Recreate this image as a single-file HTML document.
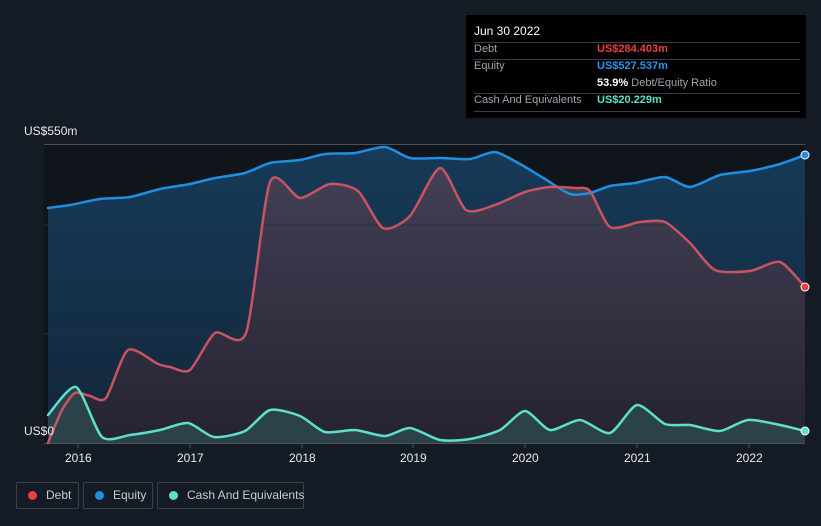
<!DOCTYPE html>
<html><head><meta charset="utf-8"><style>
html,body{margin:0;width:821px;height:526px;overflow:hidden}
body{background:#151b24;font-family:"Liberation Sans",sans-serif;position:relative}
.tt{position:absolute;left:466px;top:15px;width:340px;height:103px;background:#000;color:#fff;font-size:11px}
.tt .r{position:absolute;left:8px;width:326px;border-top:1px solid #3a3d42}
.tt div{white-space:nowrap}
.lab{color:#a0a4ab}
.leg{position:absolute;top:482px;height:27px;border:1px solid #3a3f48;border-radius:2px;color:#c8ccd2;font-size:12px;line-height:25px;box-sizing:border-box;white-space:nowrap}
.leg i{display:inline-block;width:9px;height:9px;border-radius:50%;margin:0 9px 0 11px;vertical-align:-1px}
.ax{position:absolute;color:#e8eaee;font-size:12px}
</style></head><body>
<svg width="821" height="526" style="position:absolute;left:0;top:0">
<defs>
<linearGradient id="eg" x1="0" y1="0" x2="0" y2="1"><stop offset="0" stop-color="#163a58"/><stop offset="1" stop-color="#13263a"/></linearGradient>
<linearGradient id="dg" x1="0" y1="0" x2="0" y2="1"><stop offset="0" stop-color="#433f55"/><stop offset="1" stop-color="#252331"/></linearGradient>
</defs>
<rect x="44" y="144" width="761" height="299" fill="#10141b"/>
<path id="ef" fill="url(#eg)"/>
<path id="df" fill="url(#dg)"/>
<path id="cf" fill="#2d4a50" opacity="0.8"/>
<g stroke="#2a303a" stroke-width="1"><line x1="44" y1="225" x2="805" y2="225"/><line x1="44" y1="334" x2="805" y2="334"/></g>
<g stroke="#4a4f58" stroke-width="1"><line x1="44" y1="144.5" x2="805" y2="144.5"/><line x1="44" y1="443.5" x2="805" y2="443.5"/></g>
<g stroke="#4a4f58"><line x1="78" y1="443" x2="78" y2="448"/><line x1="190" y1="443" x2="190" y2="448"/><line x1="302" y1="443" x2="302" y2="448"/><line x1="413" y1="443" x2="413" y2="448"/><line x1="525" y1="443" x2="525" y2="448"/><line x1="637" y1="443" x2="637" y2="448"/><line x1="749" y1="443" x2="749" y2="448"/></g>
<g fill="none" stroke-width="2.5" stroke-linejoin="round" stroke-linecap="round">
<path id="el" stroke="#1f8fe0"/>
<path id="dl" stroke="#c85462"/>
<path id="cl" stroke="#5ee0c8"/>
</g>
<circle cx="805" cy="155" r="4" fill="#1f8fe0" stroke="#fff" stroke-width="1"/>
<circle cx="805" cy="287" r="4" fill="#e84045" stroke="#fff" stroke-width="1"/>
<circle cx="805" cy="431" r="4" fill="#5ee0c8" stroke="#fff" stroke-width="1"/>
</svg>
<script>
var E=[[48,208],[70,205],[100,199],[130,197],[160,189],[190,184],[215,178],[245,173],[270,163],[300,160],[325,154],[355,153],[385,147],[410,158],[440,158],[470,159],[495,152],[520,164],[545,179],[570,194],[590,193],[610,186],[635,183],[665,177],[690,187],[720,175],[750,171],[780,164],[805,155]];
var D=[[48,443],[62,410],[75,393],[90,396],[106,398],[128,350],[158,364],[170,367],[190,370],[215,333],[246,333],[270,182],[300,198],[330,184],[358,191],[383,228],[410,216],[440,168],[466,210],[495,205],[525,192],[550,187],[575,188],[590,191],[610,227],[640,222],[665,222],[690,243],[715,270],[750,271],[780,262],[805,287]];
var C=[[48,415],[76,387],[102,437],[130,435],[160,430],[188,423],[214,437],[245,431],[270,410],[300,416],[325,432],[355,430],[385,436],[410,428],[440,440],[470,439],[500,430],[525,411],[550,430],[580,420],[610,433],[637,405],[665,424],[690,425],[720,431],[748,420],[780,425],[805,431]];
function sm(p){var d="M"+p[0][0]+","+p[0][1];for(var i=0;i<p.length-1;i++){var a=p[i-1]||p[i],b=p[i],c=p[i+1],e=p[i+2]||c;var t=0.12;d+=" C"+(b[0]+(c[0]-a[0])*t)+","+(b[1]+(c[1]-a[1])*t)+" "+(c[0]-(e[0]-b[0])*t)+","+(c[1]-(e[1]-b[1])*t)+" "+c[0]+","+c[1];}return d;}
function set(id,p){var s=sm(p);document.getElementById(id+"l").setAttribute("d",s);document.getElementById(id+"f").setAttribute("d",s+" L805,443 L48,443Z");}
set("e",E);set("d",D);set("c",C);
</script>
<div class="ax" style="left:24px;top:124px">US$550m</div>
<div class="ax" style="left:24px;top:424px">US$0</div>
<div class="ax" style="left:65px;top:451px">2016</div>
<div class="ax" style="left:177px;top:451px">2017</div>
<div class="ax" style="left:289px;top:451px">2018</div>
<div class="ax" style="left:400px;top:451px">2019</div>
<div class="ax" style="left:512px;top:451px">2020</div>
<div class="ax" style="left:624px;top:451px">2021</div>
<div class="ax" style="left:736px;top:451px">2022</div>
<div class="tt">
<div style="position:absolute;left:8px;top:9px;font-size:12px">Jun 30 2022</div>
<div class="r" style="top:27px"></div>
<div class="lab" style="position:absolute;left:8px;top:28px">Debt</div><div style="position:absolute;left:131px;top:28px;color:#e8403f;font-weight:bold">US$284.403m</div>
<div class="r" style="top:44px"></div>
<div class="lab" style="position:absolute;left:8px;top:45px">Equity</div><div style="position:absolute;left:131px;top:45px;color:#2a95e8;font-weight:bold">US$527.537m</div>
<div style="position:absolute;left:131px;top:62px"><b>53.9%</b> <span class="lab">Debt/Equity Ratio</span></div>
<div class="r" style="top:78px"></div>
<div class="lab" style="position:absolute;left:8px;top:79px">Cash And Equivalents</div><div style="position:absolute;left:131px;top:79px;color:#5ee0c8;font-weight:bold">US$20.229m</div>
<div class="r" style="top:96px"></div>
</div>
<div class="leg" style="left:16px;width:63px"><i style="background:#e84045"></i>Debt</div>
<div class="leg" style="left:83px;width:70px"><i style="background:#1f8fe0"></i>Equity</div>
<div class="leg" style="left:157px;width:147px"><i style="background:#5ee0c8"></i>Cash And Equivalents</div>
</body></html>
